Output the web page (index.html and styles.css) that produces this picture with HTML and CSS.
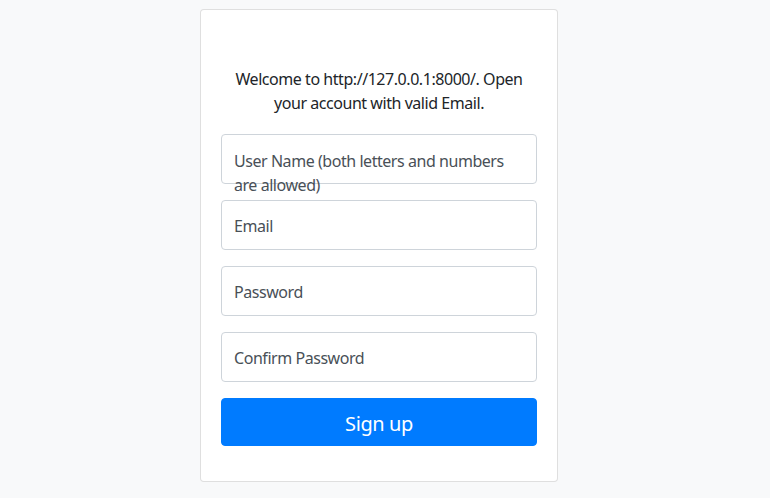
FILE: index.html
```html
<!DOCTYPE html>
<html>
<head>
<meta charset="utf-8">
<link rel="stylesheet" href="styles.css">
</head>
<body>
<div class="card">
  <p class="welcome">Welcome to http://127.0.0.1:8000/. Open your account with valid Email.</p>
  <div class="field field-wrap">User Name (both letters and numbers are allowed)</div>
  <div class="field">Email</div>
  <div class="field">Password</div>
  <div class="field">Confirm Password</div>
  <button class="btn">Sign up</button>
</div>
</body>
</html>
```

FILE: styles.css
```css
html, body {
  margin: 0;
  padding: 0;
  background: #f8f9fa;
  font-family: "Noto Sans", "Open Sans", sans-serif;
  color: #212529;
}
.card {
  box-sizing: border-box;
  width: 358px;
  height: 473px;
  margin: 9px 0 0 200px;
  background: #fff;
  border: 1px solid rgba(0,0,0,.125);
  border-radius: 4px;
  padding: 57px 20px 20px;
  display: flex;
  flex-direction: column;
  gap: 16px;
}
.welcome {
  margin: 0 0 3px;
  text-align: center;
  font-size: 16px;
  line-height: 24px;
  letter-spacing: -0.45px;
}
.field {
  box-sizing: border-box;
  height: 50px;
  border: 1px solid #ced4da;
  border-radius: 4px;
  padding: 1px 12px 0;
  display: flex;
  align-items: center;
  font-size: 16px;
  line-height: 24px;
  letter-spacing: -0.45px;
  color: #495057;
}
.field-wrap {
  align-items: flex-start;
  padding-top: 14px;
  overflow: visible;
}
.btn {
  height: 48px;
  border: 1px solid #007bff;
  background: #007bff;
  color: #fff;
  border-radius: 4px;
  font-family: inherit;
  font-size: 20px;
  line-height: 30px;
  letter-spacing: -0.4px;
  padding: 3px 0 0;
}
```
